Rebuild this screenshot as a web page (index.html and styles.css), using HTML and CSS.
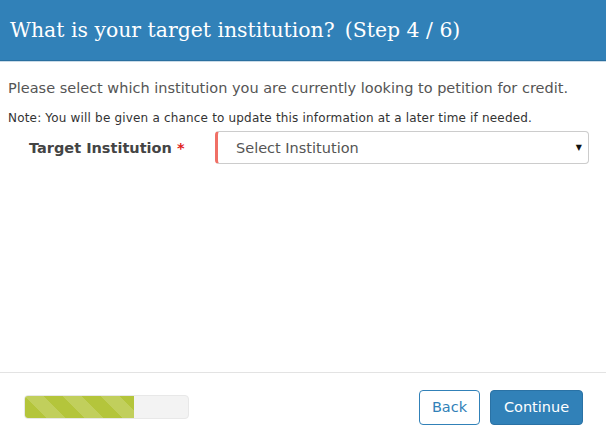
FILE: index.html
```html
<!DOCTYPE html>
<html>
<head>
<meta charset="utf-8">
<link rel="stylesheet" href="styles.css">
</head>
<body>
<div class="modal">
  <div class="header"><h1 class="title">What is your target institution?&ensp;(Step 4 / 6)</h1></div>
  <div class="body">
    <p class="lead">Please select which institution you are currently looking to petition for credit.</p>
    <p class="note">Note: You will be given a chance to update this information at a later time if needed.</p>
    <div class="field">
      <label class="label">Target Institution <span class="req">*</span></label>
      <div class="select"><span class="select-text">Select Institution</span><span class="caret">▼</span></div>
    </div>
  </div>
  <div class="footer">
    <div class="progress"><div class="bar" style="width:66.67%"></div></div>
    <div class="actions">
      <button class="btn btn-back">Back</button>
      <button class="btn btn-primary">Continue</button>
    </div>
  </div>
</div>
</body>
</html>
```
FILE: styles.css
```css
* { box-sizing: border-box; }
html, body { margin: 0; padding: 0; background: #fff; }
body { width: 606px; height: 429px; overflow: hidden; font-family: "DejaVu Sans", Verdana, sans-serif; }
.modal { display: flex; flex-direction: column; height: 429px; }
.header {
  height: 61px;
  background: #3181b8;
  border-bottom: 1px solid #2a6f9f;
  box-shadow: 0 1px 0 #c9dbe8;
  display: flex;
  align-items: center;
  padding: 0 10px 0;
}
.title {
  margin: 0;
  color: #fff;
  font-family: "DejaVu Serif", Georgia, serif;
  font-weight: normal;
  font-size: 20.4px;
}
.body { flex: 1; padding: 17px 8px 0; border-bottom: 1px solid #e3e3e3; }
.lead { margin: 0 0 12px; font-size: 14.5px; color: #555; line-height: 20px; }
.note { margin: 0 0 5px; font-size: 12px; color: #333; line-height: 16px; letter-spacing: 0.18px; }
.field { display: flex; align-items: center; }
.label { width: 207px; padding-left: 21px; font-weight: bold; font-size: 14.5px; color: #444; }
.req { color: #e02020; }
.select {
  width: 374px; height: 33px;
  border: 1px solid #ccc; border-left: 3px solid #f07066;
  border-radius: 4px;
  display: flex; align-items: center; justify-content: space-between;
  padding: 0 6px 0 18px;
  font-size: 14.5px; color: #555;
}
.caret { font-size: 8px; color: #111; }
.footer { height: 56px; display: flex; align-items: center; justify-content: space-between; padding: 12px 24px 0 24px; }
.progress { width: 165px; height: 24px; background: #f3f3f3; border: 1px solid #e8e8e8; border-radius: 4px; overflow: hidden; }
.bar {
  height: 100%;
  background-color: #b4c53b;
  background-image: linear-gradient(45deg, rgba(255,255,255,.17) 25%, transparent 25%, transparent 50%, rgba(255,255,255,.17) 50%, rgba(255,255,255,.17) 75%, transparent 75%, transparent);
  background-size: 38px 38px;
}
.actions { display: flex; gap: 10px; margin-right: -1px; }
.btn { height: 35px; border-radius: 4px; font-family: "DejaVu Sans", Verdana, sans-serif; font-size: 14.5px; padding: 0; cursor: pointer; }
.btn-back { width: 61px; background: #fff; border: 1px solid #3181b8; color: #3181b8; }
.btn-primary { width: 93px; background: #3181b8; border: 1px solid #2a72a5; color: #fff; }
```
